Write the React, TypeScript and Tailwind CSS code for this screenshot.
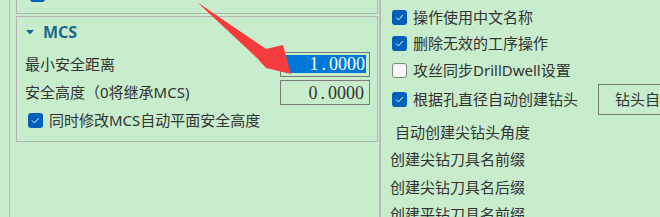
import React from "react";

const CJK = "font-[family-name:'Noto_Sans','Noto_Sans_CJK_SC',sans-serif]";
const NUM = "font-[family-name:'Liberation_Serif',serif]";

function Check({ checked }: { checked: boolean }) {
  if (!checked) {
    return (
      <span className="block h-[15px] w-[15px] shrink-0 rounded-[3px] border border-[#858585] bg-[#f8f8f8]" />
    );
  }
  return (
    <span className="flex h-[15px] w-[15px] shrink-0 items-center justify-center rounded-[3px] bg-[#005fb8]">
      <svg width="11" height="11" viewBox="0 0 16 16" fill="none">
        <path
          d="M3.5 8.5l3 3 6-6.5"
          stroke="white"
          strokeWidth="1.4"
          strokeLinecap="round"
          strokeLinejoin="round"
        />
      </svg>
    </span>
  );
}

function NumberBox({ value, selected }: { value: string; selected?: boolean }) {
  const [int, dec] = value.split(".");
  const digits = (
    <span className={`${NUM} flex text-[18px] leading-none`}>
      <span>{int}</span>
      <span className="mx-[3px]">.</span>
      <span>{dec}</span>
    </span>
  );
  return (
    <div className="flex h-[25px] w-[90px] shrink-0 border border-[#7a7a7a]">
      {selected ? (
        <div className="mb-[3px] ml-[4px] mr-[3px] mt-[2px] flex flex-1 items-center justify-between bg-[#0078d7] pr-[1px] text-white">
          <span className="h-[10px] w-[1px] self-end bg-[#d9822b]" />
          {digits}
        </div>
      ) : (
        <div className="flex flex-1 items-center justify-end pr-[5px] text-[#333]">{digits}</div>
      )}
    </div>
  );
}

function OptionRow({ checked, label }: { checked: boolean; label: string }) {
  return (
    <div className="flex h-[26.5px] shrink-0 items-center gap-[6px] pl-[11px]">
      <Check checked={checked} />
      <span className="whitespace-nowrap leading-none">{label}</span>
    </div>
  );
}

export default function App() {
  return (
    <div
      className={`${CJK} relative flex h-[217px] w-[660px] overflow-hidden bg-[#c7edcc] text-[15px] text-[#333]`}
    >
      {/* row strip on the far left */}
      <div className="flex w-[10px] shrink-0 flex-col border-r border-[#b9b9b9]">
        <div className="h-[20px] shrink-0 border-b border-[#d9e6da]" />
        {Array.from({ length: 8 }).map((_, i) => (
          <div key={i} className="h-[24px] shrink-0 border-b border-[#d9e6da]" />
        ))}
      </div>

      {/* left settings column */}
      <div className="flex w-[371px] shrink-0 flex-col border-r-2 border-[#b9b9b9] pl-[6px] pr-[1px]">
        <div className="h-[14px] shrink-0 overflow-hidden border-x border-b border-[#b4b4b4]">
          <div className="-mt-[13px] ml-[13px]">
            <Check checked />
          </div>
        </div>

        <div className="mt-[2px] flex h-[126px] shrink-0 flex-col border border-[#b4b4b4]">
          <div className="flex h-[30px] items-center gap-[9px] pl-[9px]">
            <svg width="8" height="5" viewBox="0 0 8 5">
              <polygon points="0,0 8,0 4,4.5" fill="#1b6a88" />
            </svg>
            <span className="text-[16px] font-bold leading-none text-[#1b6a88]">MCS</span>
          </div>

          <div className="mt-[5px] flex h-[25px] items-center justify-between pl-[8px] pr-[7px]">
            <span className="leading-none">最小安全距离</span>
            <NumberBox value="1.0000" selected />
          </div>
          <div className="mt-[3px] flex h-[25px] items-center justify-between pl-[8px] pr-[7px]">
            <span className="leading-none">安全高度（0将继承MCS)</span>
            <NumberBox value="0.0000" />
          </div>
          <div className="mt-[3px] flex h-[24px] items-center gap-[6px] pl-[11px]">
            <Check checked />
            <span className="leading-none">同时修改MCS自动平面安全高度</span>
          </div>
        </div>
      </div>

      {/* right settings column */}
      <div className="flex min-w-0 flex-1 flex-col pt-[4px]">
        <OptionRow checked label="操作使用中文名称" />
        <OptionRow checked label="删除无效的工序操作" />
        <OptionRow checked={false} label="攻丝同步DrillDwell设置" />
        <div className="flex h-[31px] shrink-0 items-center pl-[11px]">
          <Check checked />
          <span className="ml-[6px] whitespace-nowrap leading-none">根据孔直径自动创建钻头</span>
          <button className="ml-[20px] flex h-[31px] shrink-0 items-center whitespace-nowrap border border-[#7a7a7a] px-[16px] leading-none">
            钻头自动创建设置
          </button>
        </div>
        <div className="mt-[4px] flex h-[27.5px] shrink-0 items-center pl-[14px] leading-none">自动创建尖钻头角度</div>
        <div className="flex h-[27.5px] shrink-0 items-center pl-[9px] leading-none">创建尖钻刀具名前缀</div>
        <div className="flex h-[27.5px] shrink-0 items-center pl-[9px] leading-none">创建尖钻刀具名后缀</div>
        <div className="flex h-[27.5px] shrink-0 items-center pl-[9px] leading-none">创建平钻刀具名前缀</div>
      </div>

      {/* red annotation arrow */}
      <svg
        className="pointer-events-none absolute left-0 top-0"
        width="660"
        height="217"
        viewBox="0 0 660 217"
      >
        <polygon points="197,2 266,49 283,45 291,74 266,68 257,58" fill="#f53c3c" />
      </svg>
    </div>
  );
}
